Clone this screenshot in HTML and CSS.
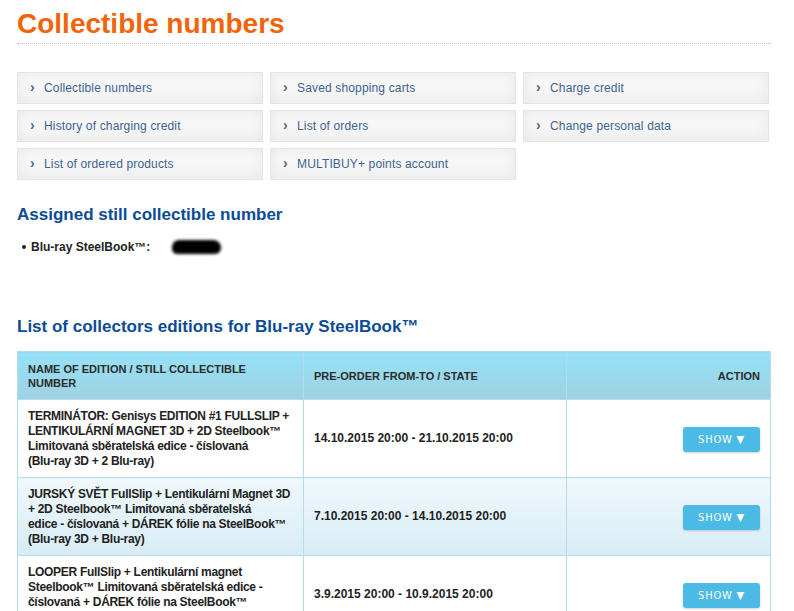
FILE: index.html
```html
<!DOCTYPE html>
<html lang="en">
<head>
<meta charset="utf-8">
<title>Collectible numbers</title>
<link rel="stylesheet" href="styles.css">
</head>
<body>
<div class="page">
  <h1 class="title">Collectible numbers</h1>

  <nav class="tiles">
    <a class="tile" href="#"><span class="chev">&rsaquo;</span>Collectible numbers</a>
    <a class="tile" href="#"><span class="chev">&rsaquo;</span>Saved shopping carts</a>
    <a class="tile" href="#"><span class="chev">&rsaquo;</span>Charge credit</a>
    <a class="tile" href="#"><span class="chev">&rsaquo;</span>History of charging credit</a>
    <a class="tile" href="#"><span class="chev">&rsaquo;</span>List of orders</a>
    <a class="tile" href="#"><span class="chev">&rsaquo;</span>Change personal data</a>
    <a class="tile" href="#"><span class="chev">&rsaquo;</span>List of ordered products</a>
    <a class="tile" href="#"><span class="chev">&rsaquo;</span>MULTIBUY+ points account</a>
  </nav>

  <h2 class="section first">Assigned still collectible number</h2>
  <ul class="assigned">
    <li><span class="label">Blu-ray SteelBook™:</span><span class="blob"></span></li>
  </ul>

  <h2 class="section second">List of collectors editions for Blu-ray SteelBook™</h2>

  <table class="editions">
    <thead>
      <tr>
        <th class="c1">NAME OF EDITION / STILL COLLECTIBLE<br>NUMBER</th>
        <th class="c2">PRE-ORDER FROM-TO / STATE</th>
        <th class="c3">ACTION</th>
      </tr>
    </thead>
    <tbody>
      <tr>
        <td class="c1">TERMINÁTOR: Genisys EDITION #1 FULLSLIP +<br>LENTIKULÁRNÍ MAGNET 3D + 2D Steelbook™<br>Limitovaná sběratelská edice - číslovaná<br>(Blu-ray 3D + 2 Blu-ray)</td>
        <td class="c2">14.10.2015 20:00 - 21.10.2015 20:00</td>
        <td class="c3"><button class="show">SHOW ▼</button></td>
      </tr>
      <tr class="alt">
        <td class="c1">JURSKÝ SVĚT FullSlip + Lentikulární Magnet 3D<br>+ 2D Steelbook™ Limitovaná sběratelská<br>edice - číslovaná + DÁREK fólie na SteelBook™<br>(Blu-ray 3D + Blu-ray)</td>
        <td class="c2">7.10.2015 20:00 - 14.10.2015 20:00</td>
        <td class="c3"><button class="show">SHOW ▼</button></td>
      </tr>
      <tr>
        <td class="c1">LOOPER FullSlip + Lentikulární magnet<br>Steelbook™ Limitovaná sběratelská edice -<br>číslovaná + DÁREK fólie na SteelBook™<br>(Blu-ray)</td>
        <td class="c2">3.9.2015 20:00 - 10.9.2015 20:00</td>
        <td class="c3"><button class="show">SHOW ▼</button></td>
      </tr>
    </tbody>
  </table>
</div>
</body>
</html>
```
FILE: styles.css
```css
html, body {
  margin: 0;
  padding: 0;
  background: #fff;
}

body {
  font-family: "Liberation Sans", Arial, sans-serif;
  color: #222;
}

.page {
  width: 754px;
  padding: 8px 0 40px 17px;
}

.title {
  margin: 0;
  font-size: 28px;
  line-height: 32px;
  font-weight: bold;
  color: #f0640a;
  padding-bottom: 3px;
  border-bottom: 1px dotted #bdbdbd;
}

.tiles {
  display: grid;
  grid-template-columns: repeat(3, 1fr);
  grid-auto-rows: 32px;
  gap: 6px 7px;
  width: 752px;
  margin-top: 28px;
}

.tile {
  display: flex;
  align-items: center;
  border: 1px solid #e3e3e3;
  background: linear-gradient(#f9f9f9, #f3f3f3);
  box-shadow: inset 0 0 12px #e6e6e6, inset 0 0 0 1px #fbfbfb;
  color: #3d6491;
  font-size: 12px;
  text-decoration: none;
  padding-left: 12px;
  letter-spacing: 0.15px;
}

.chev {
  display: inline-block;
  width: 14px;
  font-size: 14px;
  font-weight: bold;
  color: #666;
  line-height: 12px;
  margin-top: -2px;
}

.section {
  margin: 0;
  font-size: 17px;
  line-height: 20px;
  font-weight: bold;
  color: #0b4b97;
}

.section.first {
  margin-top: 25px;
}

.section.second {
  margin-top: 59px;
}

.assigned {
  margin: 11px 0 0;
  padding: 0 0 0 14px;
  list-style: none;
}

.assigned li {
  position: relative;
  display: flex;
  align-items: center;
  height: 22px;
  font-size: 12px;
  font-weight: bold;
  color: #222;
}

.assigned li::before {
  content: "";
  position: absolute;
  left: -9px;
  top: 9px;
  width: 4px;
  height: 4px;
  border-radius: 50%;
  background: #222;
}

.label {
  width: 141px;
}

.blob {
  display: inline-block;
  width: 49px;
  height: 14px;
  background: #000;
  border-radius: 8px 9px 7px 6px;
  filter: blur(1.5px);
}

.editions {
  margin-top: 14px;
  width: 754px;
  table-layout: fixed;
  border-collapse: collapse;
  border: 1px solid #b3dcef;
  font-size: 12px;
}

.editions th {
  height: 48px;
  box-sizing: border-box;
  background: linear-gradient(#95e2f7, #9fd1e2);
  font-size: 11px;
  line-height: 14px;
  font-weight: bold;
  color: #2b2b2b;
  text-align: left;
  padding: 0 10px;
  border: 1px solid #b3dcef;
  border-top-color: #a9dcf0;
  vertical-align: middle;
}

.editions td {
  height: 78px;
  box-sizing: border-box;
  padding: 0 10px;
  line-height: 15px;
  font-weight: bold;
  color: #222;
  border: 1px solid #b3dcef;
  vertical-align: middle;
}

.editions .c1 { width: 286px; }
.editions td.c1 {
  letter-spacing: -0.3px;
  white-space: nowrap;
}
.editions .c2 { width: 263px; }
.editions .c3 { text-align: right; }

.editions tr.alt td {
  background: linear-gradient(#eff8fb, #d8ecf6);
}

.show {
  width: 77px;
  height: 25px;
  border: 0;
  border-radius: 3px;
  background: #4bbbe6;
  box-shadow: 0 1px 2px rgba(0, 0, 0, 0.18);
  color: #fff;
  font-family: "DejaVu Sans Condensed", "Liberation Sans Narrow", sans-serif;
  font-size: 11px;
  letter-spacing: 0.8px;
  padding: 0;
  margin-top: 2px;
  cursor: pointer;
}
```
